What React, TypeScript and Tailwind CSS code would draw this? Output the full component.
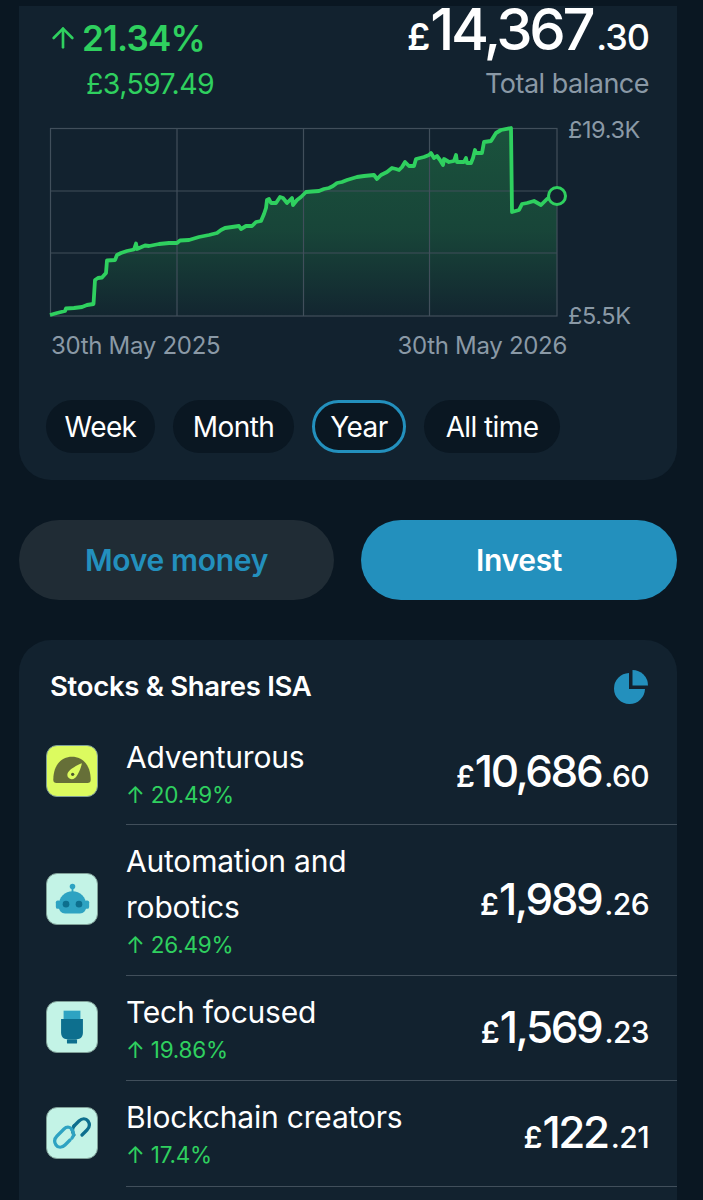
import { ArrowUp } from "lucide-react";

const linePoints =
  "51,315 58,313 66,311 67,308.5 75,308 83,307 88,305 94.5,304 96,280 99,278 103,277.5 107,273 108,260.5 116,260 118,255 122,253 128,251 135,249.5 137,243.5 138,249 146,245.5 150,246 160,244 170,243 178,243 181,240.5 190,240 200,237 210,235 218,233 222,230 226,228 233,227 240,226 242,229 247,226 253,226 257,222 262,221 265,214 267,208 268,200 270,199 272,203 277,203 281,197 284,198 288,203 291,200 293,198 294,205 298,200 302,197 307,192 313,191.5 320,191 325,189 330,188 334,186 338,183 343,182 348,180 353,178.5 358,177 365,176 375,175 378,179 382,175 388,172 393,168 397,169 400,170 403,167 406,162 410,166 415,166 417,159 425,157 430,155 432,153 435,158 438,156 441,160 444,165 445,159 450,162 455,161 457,155 458,162 465,162 467,158 468,163 472,163 474,158 476,150 477,153 483,153 485,142 492,141 497,133 502,130 512,128 513,212 520,210 523,204 528,203 535,201 542,205 548,199 551,197";

const rows = [
  { name: ["Adventurous"], pct: "20.49%", pounds: "10,686", pence: ".60", h: "h-[105px]", pad: "pt-[2px]", icon: <GaugeIcon />, tile: "bg-[#dcfb5f]" },
  { name: ["Automation and", "robotics"], pct: "26.49%", pounds: "1,989", pence: ".26", h: "h-[151px]", pad: "", icon: <RobotIcon />, tile: "bg-[#c3f3e6]" },
  { name: ["Tech focused"], pct: "19.86%", pounds: "1,569", pence: ".23", h: "h-[105px]", pad: "", icon: <PlugIcon />, tile: "bg-[#c3f3e6]" },
  { name: ["Blockchain creators"], pct: "17.4%", pounds: "122", pence: ".21", h: "h-[106px]", pad: "", icon: <LinkIcon />, tile: "bg-[#c3f3e6]" },
];

function GaugeIcon() {
  return (
    <svg width="44" height="44" viewBox="0 0 40 40">
      <path d="M3 28 C3 14 11 7 20 7 C29 7 37 14 37 28 C37 30 36 31 34 31 L6 31 C4 31 3 30 3 28 Z" fill="#666f38" />
      <path d="M29 13 C28 18 25 25 22.6 26.4 A4 4 0 0 1 17 20.5 C19 18 24 15 29 13 Z" fill="#dcfb5f" />
      <circle cx="20.6" cy="23" r="1.5" fill="#4d5530" />
    </svg>
  );
}

function RobotIcon() {
  return (
    <svg width="37" height="37" viewBox="0 0 40 40">
      <circle cx="20" cy="6" r="3" fill="#2ea3c2" />
      <rect x="19" y="7" width="2" height="6" fill="#2ea3c2" />
      <rect x="2" y="21" width="5" height="9" rx="2" fill="#2ea3c2" />
      <rect x="33" y="21" width="5" height="9" rx="2" fill="#2ea3c2" />
      <path d="M5 27 C5 17 12 11 20 11 C28 11 35 17 35 27 C35 32 32 35 28 35 L12 35 C8 35 5 32 5 27 Z" fill="#2ea3c2" />
      <circle cx="13" cy="25" r="3.6" fill="#0d6f8e" />
      <circle cx="27" cy="25" r="3.6" fill="#0d6f8e" />
    </svg>
  );
}

function PlugIcon() {
  return (
    <svg width="34" height="37" viewBox="0 0 40 44">
      <rect x="10" y="2" width="20" height="12" fill="#2ea3c2" />
      <path d="M7 12 L33 12 L33 28 C33 33 30 36 26 36 L14 36 C10 36 7 33 7 28 Z" fill="#0d6f8e" />
      <rect x="14" y="36" width="12" height="5" rx="1" fill="#0d6f8e" />
    </svg>
  );
}

function LinkIcon() {
  return (
    <svg width="40" height="40" viewBox="0 0 40 40" fill="none" strokeWidth="3.2" strokeLinecap="round">
      <path d="M22 13 L27 8 C30 5 34 5 36 8 C38 11 38 14 35 17 L30 22" stroke="#0d6f8e" />
      <path d="M22 13 C20 16 20 19 22 22" stroke="#0d6f8e" />
      <path d="M18 27 L13 32 C10 35 6 35 4 32 C2 29 2 26 5 23 L12 16 C15 13 19 14 20 17" stroke="#2ea3c2" />
      <path d="M20 17 C22 19 22 23 20 25" stroke="#2ea3c2" />
    </svg>
  );
}

const App = () => {
  return (
    <div className="w-[703px] h-[1200px] overflow-hidden bg-[#0a1722] pt-[6px] pl-[19px] pr-[26px] text-white font-['Inter',sans-serif]">
      <section className="h-[474px] rounded-b-[32px] bg-[#12222f] pl-[31px] pr-[28px]">
        <div className="flex justify-between h-[117px]">
          <div>
            <div className="flex items-center h-[64px] text-[#2fd05f]">
              <ArrowUp size={32} strokeWidth={2} className="-ml-[3px] mr-[3px]" />
              <span className="text-[35px] font-semibold tracking-[-0.8px]">21.34%</span>
            </div>
            <div className="pl-[36px] text-[28.5px] leading-[30px] text-[#2fd05f] tracking-[-0.6px] mt-[-1px]">£3,597.49</div>
          </div>
          <div className="flex flex-col items-end">
            <div className="flex items-baseline -mt-[5px] h-[69px] leading-[56px] font-medium">
              <span className="text-[37px] font-semibold">£</span>
              <span className="text-[58px] tracking-[-3.4px]">14,367</span>
              <span className="text-[36px] ml-[4px] tracking-[-1px]">.30</span>
            </div>
            <div className="text-[27px] leading-[30px] text-[#8a99a6] mt-[-1px] tracking-[-0.5px]">Total balance</div>
          </div>
        </div>

        <div className="flex mt-[5px]">
          <svg width="507" height="188" viewBox="51 128 507 188" className="overflow-visible shrink-0">
            <defs>
              <linearGradient id="fill" x1="0" y1="0" x2="0" y2="1">
                <stop offset="0" stopColor="#2fd05f" stopOpacity="0.28" />
                <stop offset="0.55" stopColor="#2fd05f" stopOpacity="0.2" />
                <stop offset="1" stopColor="#2fd05f" stopOpacity="0.02" />
              </linearGradient>
            </defs>
            <path d={`M51,316 L${linePoints.replace(/ /g, " L")} L558,196 L558,316 Z`} fill="url(#fill)" />
            <g stroke="#414f5b" strokeWidth="1.2" fill="none">
              <rect x="51.5" y="128.5" width="506.5" height="187.5" />
              <path d="M178 128.5V316M304.5 128.5V316M430.5 128.5V316M51.5 191H558M51.5 253H558" />
            </g>
            <polyline points={linePoints} fill="none" stroke="#2fd05f" strokeWidth="3.8" strokeLinejoin="round" />
            <circle cx="558" cy="196" r="8.5" fill="#12222f" stroke="#2fd05f" strokeWidth="3" />
          </svg>
          <div className="flex flex-col justify-between pl-[11px] h-[188px] text-[23.5px] leading-[26px] text-[#8a99a6] tracking-[-0.4px]">
            <span className="-mt-[11px]">£19.3K</span>
            <span className="-mb-[13px]">£5.5K</span>
          </div>
        </div>

        <div className="flex justify-between w-[517px] mt-[15px] pl-[1px] text-[24px] leading-[30px] text-[#8a99a6] tracking-[-0.3px]">
          <span>30th May 2025</span>
          <span>30th May 2026</span>
        </div>

        <div className="flex gap-[18px] mt-[39px] -ml-[4px] text-[28px] tracking-[-0.6px]">
          <div className="h-[53px] w-[109px] rounded-full bg-[#0a1722] flex items-center justify-center">Week</div>
          <div className="h-[53px] w-[121px] rounded-full bg-[#0a1722] flex items-center justify-center">Month</div>
          <div className="h-[53px] w-[94px] rounded-full bg-[#0a1722] border-[3px] border-[#2390bd] flex items-center justify-center">Year</div>
          <div className="h-[53px] w-[136px] rounded-full bg-[#0a1722] flex items-center justify-center">All time</div>
        </div>
      </section>

      <div className="flex justify-between mt-[40px] text-[30px] font-semibold tracking-[-0.3px]">
        <div className="w-[315px] h-[80px] rounded-full bg-[#202c35] text-[#2390bd] flex items-center justify-center">Move money</div>
        <div className="w-[316px] h-[80px] rounded-full bg-[#2390bd] flex items-center justify-center">Invest</div>
      </div>

      <section className="mt-[40px] h-[570px] rounded-t-[32px] bg-[#12222f]">
        <div className="flex items-center justify-between h-[81px] pl-[31px] pr-[29px] pt-[13px] -mb-[1px]">
          <h2 className="text-[27.5px] font-semibold tracking-[-0.3px]">Stocks &amp; Shares ISA</h2>
          <svg width="34" height="34" viewBox="0 0 34 34" fill="#2390bd">
            <path d="M15 3 A15.5 15.5 0 1 0 31 19 L15 19 Z" />
            <path d="M18.5 0 A15.5 15.5 0 0 1 34 15.5 L18.5 15.5 Z" />
          </svg>
        </div>
        {rows.map((row) => (
          <div key={row.pounds} className={`flex items-center ${row.h}`}>
            <div className={`w-[52px] h-[52px] ml-[27px] -mt-[3px] shrink-0 rounded-[11px] border border-[#7f9f97] flex items-center justify-center ${row.tile}`}>
              {row.icon}
            </div>
            <div className="ml-[28px] flex-1 h-full flex items-center justify-between pr-[28px] pb-[3px] border-b border-[#414f5b]">
              <div className={row.pad}>
                {row.name.map((line) => (
                  <div key={line} className="text-[30px] leading-[46px] tracking-[-0.2px]">{line}</div>
                ))}
                <div className="text-[22.5px] leading-[30px] text-[#2fd05f] tracking-[-0.2px]">↑ {row.pct}</div>
              </div>
              <div className="flex items-baseline font-medium">
                <span className="text-[30px] font-semibold">£</span>
                <span className="text-[44px] tracking-[-2.4px]">{row.pounds}</span>
                <span className="text-[30px] ml-[3px] tracking-[-0.6px]">{row.pence}</span>
              </div>
            </div>
          </div>
        ))}
      </section>
    </div>
  );
};

export default App;
